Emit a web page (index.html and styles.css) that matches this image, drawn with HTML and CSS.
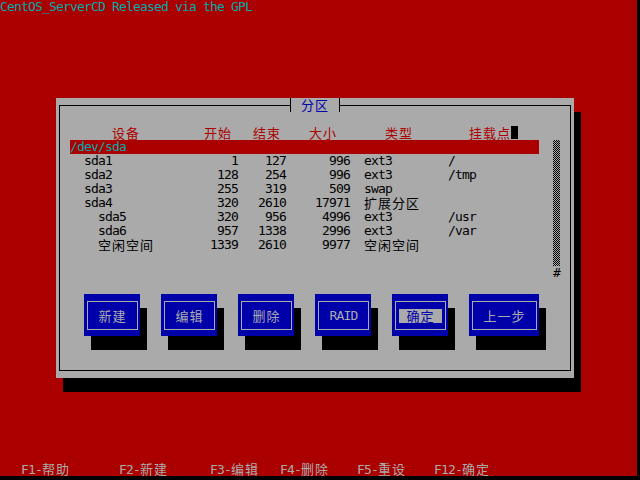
FILE: index.html
```html
<!DOCTYPE html>
<html>
<head>
<meta charset="utf-8">
<title>分区</title>
<link rel="stylesheet" href="styles.css">
</head>
<body>
<div class="screen">
  <div class="topline">CentOS_ServerCD Released via the GPL</div>
  <div class="dialog">
    <div class="frame">
      <div class="title"><span class="cj">分区</span></div>
      <div class="listarea">
        <div class="listcol">
          <div class="row head">
            <div class="c-name h-name"><span class="cj">设备</span></div>
            <div class="c-num h-start"><span class="cj">开始</span></div>
            <div class="c-num h-end"><span class="cj">结束</span></div>
            <div class="c-num h-size"><span class="cj">大小</span></div>
            <div class="c-type h-type"><span class="cj">类型</span></div>
            <div class="c-mount h-mount"><span class="cj">挂载点</span><span class="cursor"></span></div>
          </div>
          <div class="list">
            <div class="row sel"><div class="c-all">/dev/sda</div></div>
            <div class="row">
              <div class="c-name ind1">sda1</div><div class="c-num">1</div><div class="c-num">127</div><div class="c-num">996</div><div class="c-type">ext3</div><div class="c-mount">/</div>
            </div>
            <div class="row">
              <div class="c-name ind1">sda2</div><div class="c-num">128</div><div class="c-num">254</div><div class="c-num">996</div><div class="c-type">ext3</div><div class="c-mount">/tmp</div>
            </div>
            <div class="row">
              <div class="c-name ind1">sda3</div><div class="c-num">255</div><div class="c-num">319</div><div class="c-num">509</div><div class="c-type">swap</div><div class="c-mount"></div>
            </div>
            <div class="row">
              <div class="c-name ind1">sda4</div><div class="c-num">320</div><div class="c-num">2610</div><div class="c-num">17971</div><div class="c-type"><span class="cj">扩展分区</span></div><div class="c-mount"></div>
            </div>
            <div class="row">
              <div class="c-name ind2">sda5</div><div class="c-num">320</div><div class="c-num">956</div><div class="c-num">4996</div><div class="c-type">ext3</div><div class="c-mount">/usr</div>
            </div>
            <div class="row">
              <div class="c-name ind2">sda6</div><div class="c-num">957</div><div class="c-num">1338</div><div class="c-num">2996</div><div class="c-type">ext3</div><div class="c-mount">/var</div>
            </div>
            <div class="row">
              <div class="c-name ind2"><span class="cj">空闲空间</span></div><div class="c-num">1339</div><div class="c-num">2610</div><div class="c-num">9977</div><div class="c-type"><span class="cj">空闲空间</span></div><div class="c-mount"></div>
            </div>
          </div>
        </div>
        <div class="scroll">
          <div class="track"></div>
          <div class="thumb">#</div>
        </div>
      </div>
      <div class="buttons">
        <div class="btn"><div class="btn-in"><span class="lbl"><span class="cj">新建</span></span></div></div>
        <div class="btn"><div class="btn-in"><span class="lbl"><span class="cj">编辑</span></span></div></div>
        <div class="btn"><div class="btn-in"><span class="lbl"><span class="cj">删除</span></span></div></div>
        <div class="btn"><div class="btn-in"><span class="lbl">RAID</span></div></div>
        <div class="btn focus"><div class="btn-in"><span class="lbl"><span class="cj">确定</span></span></div></div>
        <div class="btn wide"><div class="btn-in"><span class="lbl"><span class="cj">上一步</span></span></div></div>
      </div>
    </div>
  </div>
  <div class="help">
    <div>F1-<span class="cj">帮助</span></div>
    <div>F2-<span class="cj">新建</span></div>
    <div>F3-<span class="cj">编辑</span></div>
    <div>F4-<span class="cj">删除</span></div>
    <div>F5-<span class="cj">重设</span></div>
    <div>F12-<span class="cj">确定</span></div>
  </div>
</div>
</body>
</html>
```
FILE: styles.css
```css
html, body {
  margin: 0;
  padding: 0;
  background: #000;
}
body {
  width: 640px;
  height: 480px;
  overflow: hidden;
  font-family: "DejaVu Sans Mono", "Liberation Mono", "Noto Sans CJK SC", monospace;
  font-size: 13px;
  letter-spacing: -0.83px;
  line-height: 14px;
}
.cj {
  font-family: "Noto Sans CJK SC", "Noto Sans CJK JP", sans-serif;
  font-size: 13px;
  line-height: 14px;
  letter-spacing: 1px;
}
.screen {
  width: 637px;
  height: 476px;
  background: #aa0000;
}
.topline {
  height: 14px;
  color: #00aaaa;
  white-space: pre;
}
.dialog {
  margin: 84px 0 0 56px;
  width: 518px;
  height: 280px;
  box-sizing: border-box;
  padding: 7px 3px;
  background: #aaaaaa;
  box-shadow: 7px 14px 0 #000;
}
.frame {
  position: relative;
  height: 100%;
  box-sizing: border-box;
  border: 1px solid #000;
}
.title {
  position: absolute;
  top: -8px;
  left: 230px;
  width: 50px;
  height: 14px;
  box-sizing: border-box;
  border-left: 1px solid #000;
  border-right: 1px solid #000;
  background: #aaaaaa;
  color: #0000aa;
  text-align: center;
}
.listarea {
  display: flex;
  gap: 14px;
  margin-top: 20px;
  padding-left: 10px;
}
.listcol {
  width: 469px;
}
.row {
  display: grid;
  grid-template-columns: 98px 70px 48px 64px 98px 91px;
  height: 14px;
  white-space: pre;
  color: #000;
}
.list {
  height: 140px;
}
.head {
  color: #aa0000;
}
.c-num { text-align: right; }
.c-type { padding-left: 14px; }
.ind1 { padding-left: 14px; }
.ind2 { padding-left: 28px; }
.h-name { padding-left: 42px; }
.h-start { padding-right: 6px; }
.h-end { padding-right: 5px; }
.h-size { padding-right: 13px; }
.h-type { padding-left: 35px; }
.h-mount { padding-left: 21px; display: flex; }
.cursor {
  display: inline-block;
  width: 7px;
  height: 13px;
  background: #000;
}
.sel {
  background: #aa0000;
  color: #00aaaa;
}
.c-all {
  grid-column: 1 / -1;
}
.scroll {
  width: 7px;
  margin-top: 14px;
}
.track {
  height: 126px;
  background: repeating-conic-gradient(#000 0 25%, #aaaaaa 0 50%) 0 0 / 2px 2px;
}
.thumb {
  height: 14px;
  color: #000;
  text-align: center;
  letter-spacing: 0;
}
.buttons {
  display: flex;
  gap: 21px;
  margin: 14px 0 0 24px;
}
.btn {
  width: 56px;
  height: 42px;
  box-sizing: border-box;
  padding: 7px 2px 6px 3px;
  background: #0000aa;
  box-shadow: 7px 14px 0 #000;
}
.btn.wide {
  width: 70px;
}
.btn-in {
  height: 100%;
  box-sizing: border-box;
  border: 1px solid #aaaaaa;
  display: flex;
  align-items: center;
  justify-content: center;
}
.lbl {
  padding: 0 7px;
  height: 14px;
  color: #aaaaaa;
  white-space: pre;
}
.btn.focus .lbl {
  background: #aaaaaa;
  color: #0000aa;
}
.help {
  margin-top: 84px;
  height: 14px;
  padding-left: 21px;
  display: grid;
  grid-template-columns: 98px 91px 70px 77px 77px auto;
  color: #aaaaaa;
  white-space: pre;
}
```
